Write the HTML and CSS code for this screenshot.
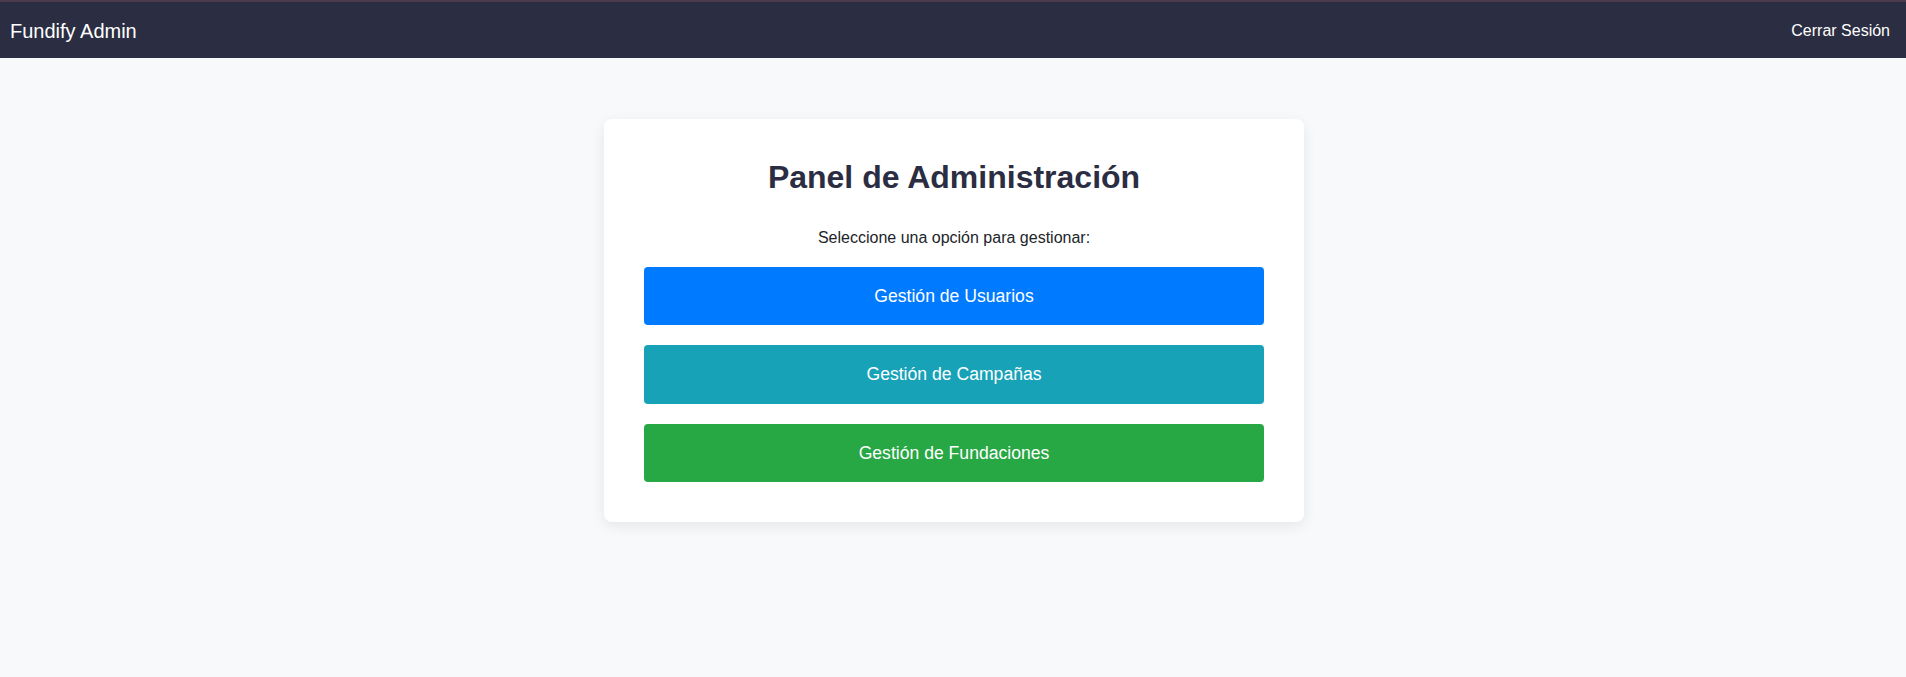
FILE: index.html
```html
<!DOCTYPE html>
<html lang="es">
<head>
<meta charset="utf-8">
<title>Fundify Admin</title>
<link rel="stylesheet" href="styles.css">
</head>
<body>
<header class="navbar">
  <span class="brand">Fundify Admin</span>
  <a class="logout" href="#">Cerrar Sesión</a>
</header>
<main class="main">
  <section class="card">
    <h1 class="title">Panel de Administración</h1>
    <p class="subtitle">Seleccione una opción para gestionar:</p>
    <div class="actions">
      <a class="btn btn-blue" href="#">Gestión de Usuarios</a>
      <a class="btn btn-teal" href="#">Gestión de Campañas</a>
      <a class="btn btn-green" href="#">Gestión de Fundaciones</a>
    </div>
  </section>
</main>
</body>
</html>
```
FILE: styles.css
```css
* { box-sizing: border-box; }
html, body { margin: 0; padding: 0; }
body {
  background: #f8f9fa;
  font-family: "Liberation Sans", Arial, sans-serif;
  color: #212529;
  min-height: 677px;
}
.navbar {
  height: 58px;
  background: #2b2d42;
  border-top: 2px solid #4a3a4c;
  display: flex;
  align-items: center;
  justify-content: space-between;
  padding: 0 16px 0 10px;
}
.brand {
  color: #ffffff;
  font-size: 20px;
  line-height: 1;
  padding-top: 1px;
}
.logout {
  color: #ffffff;
  text-decoration: none;
  font-size: 16px;
  padding-top: 1px;
}
.main {
  display: flex;
  justify-content: center;
  padding: 61px 0 0 2px;
}
.card {
  width: 700px;
  background: #ffffff;
  border-radius: 8px;
  box-shadow: 0 4px 14px rgba(0, 0, 0, 0.08);
  padding: 40px;
  text-align: center;
}
.title {
  margin: 0 0 30px;
  font-size: 32px;
  font-weight: 700;
  line-height: 1.15;
  color: #2b2d42;
}
.subtitle {
  margin: 0 0 17px;
  font-size: 16px;
  line-height: 24px;
  color: #212529;
}
.actions {
  display: flex;
  flex-direction: column;
  gap: 20px;
}
.btn {
  display: block;
  padding: 16px;
  font-size: 17.6px;
  line-height: 1.5;
  color: #ffffff;
  text-decoration: none;
  border-radius: 4px;
}
.btn-blue { background: #007bff; }
.btn-teal { background: #17a2b8; }
.btn-green { background: #28a745; }
```
